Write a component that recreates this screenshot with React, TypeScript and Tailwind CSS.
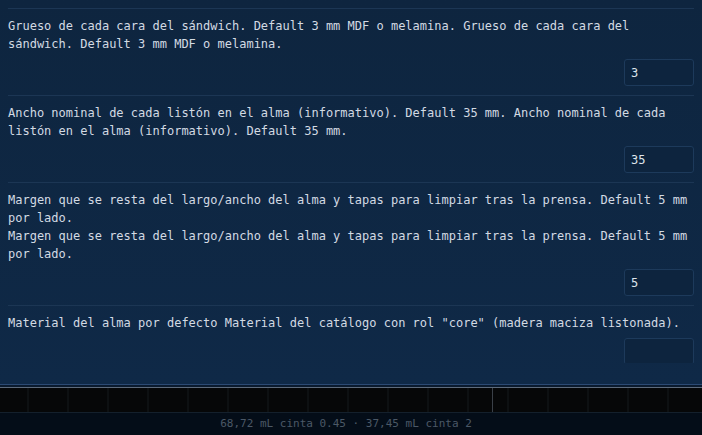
import React from 'react';

interface SettingRowProps {
  lines: string[];
  value: string;
}

const SettingRow: React.FC<SettingRowProps> = ({ lines, value }) => {
  return (
    <div className="border-t border-[#1c3654] pt-2 pb-[9px]">
      {/* descripción */}
      <div className="text-[12px] leading-[18px] text-[#d3dae3]">
        {lines.map((l, i) => (
          <p key={i}>{l}</p>
        ))}
      </div>
      {/* campo */}
      <div className="mt-[6px] flex justify-end">
        <input
          readOnly
          value={value}
          className="h-[27px] w-[70px] rounded-[3px] border border-[#1d3a5b] bg-[#0d243e] px-[6px] text-[12px] text-[#dfe5ec] outline-none"
          style={{ fontFamily: 'inherit' }}
        />
      </div>
    </div>
  );
};

const rows: SettingRowProps[] = [
  {
    lines: [
      'Grueso de cada cara del sándwich. Default 3 mm MDF o melamina. Grueso de cada cara del sándwich. Default 3 mm MDF o melamina.',
    ],
    value: '3',
  },
  {
    lines: [
      'Ancho nominal de cada listón en el alma (informativo). Default 35 mm. Ancho nominal de cada listón en el alma (informativo). Default 35 mm.',
    ],
    value: '35',
  },
  {
    lines: [
      'Margen que se resta del largo/ancho del alma y tapas para limpiar tras la prensa. Default 5 mm por lado.',
      'Margen que se resta del largo/ancho del alma y tapas para limpiar tras la prensa. Default 5 mm por lado.',
    ],
    value: '5',
  },
  {
    lines: ['Material del alma por defecto Material del catálogo con rol "core" (madera maciza listonada).'],
    value: '',
  },
];

export default function App() {
  return (
    <div
      className="flex h-[435px] w-[702px] flex-col overflow-hidden bg-[#040d18]"
      style={{ fontFamily: '"DejaVu Sans Mono", "Liberation Mono", monospace' }}
    >
      {/* panel de ajustes */}
      <div className="flex h-[384px] flex-col bg-gradient-to-b from-[#0e253f] to-[#0f2947] pb-[21px]">
        <div className="flex-1 overflow-hidden px-2 pt-2">
          {rows.map((r, i) => (
            <SettingRow key={i} {...r} />
          ))}
        </div>
      </div>

      {/* bordes del panel */}
      <div className="h-px bg-[#2b4a74]" />
      <div className="h-[2px] bg-[#0a1a2e]" />
      <div className="h-px bg-[#5d6b7c]" />

      {/* línea de tiempo */}
      <div className="relative h-[24px] bg-[#060708] bg-[repeating-linear-gradient(90deg,transparent_0px,transparent_27px,#0d1012_27px,#0d1012_29px,transparent_29px,transparent_40px)]">
        <div className="absolute top-0 bottom-0 left-[492px] w-px bg-[#3a4048]" />
      </div>
      <div className="h-px bg-[#14202c]" />

      {/* barra de estado */}
      <div className="flex flex-1 items-center justify-center pr-[10px] text-[11px] text-[#4b5866]">
        68,72 mL cinta 0.45 · 37,45 mL cinta 2
      </div>
    </div>
  );
}
